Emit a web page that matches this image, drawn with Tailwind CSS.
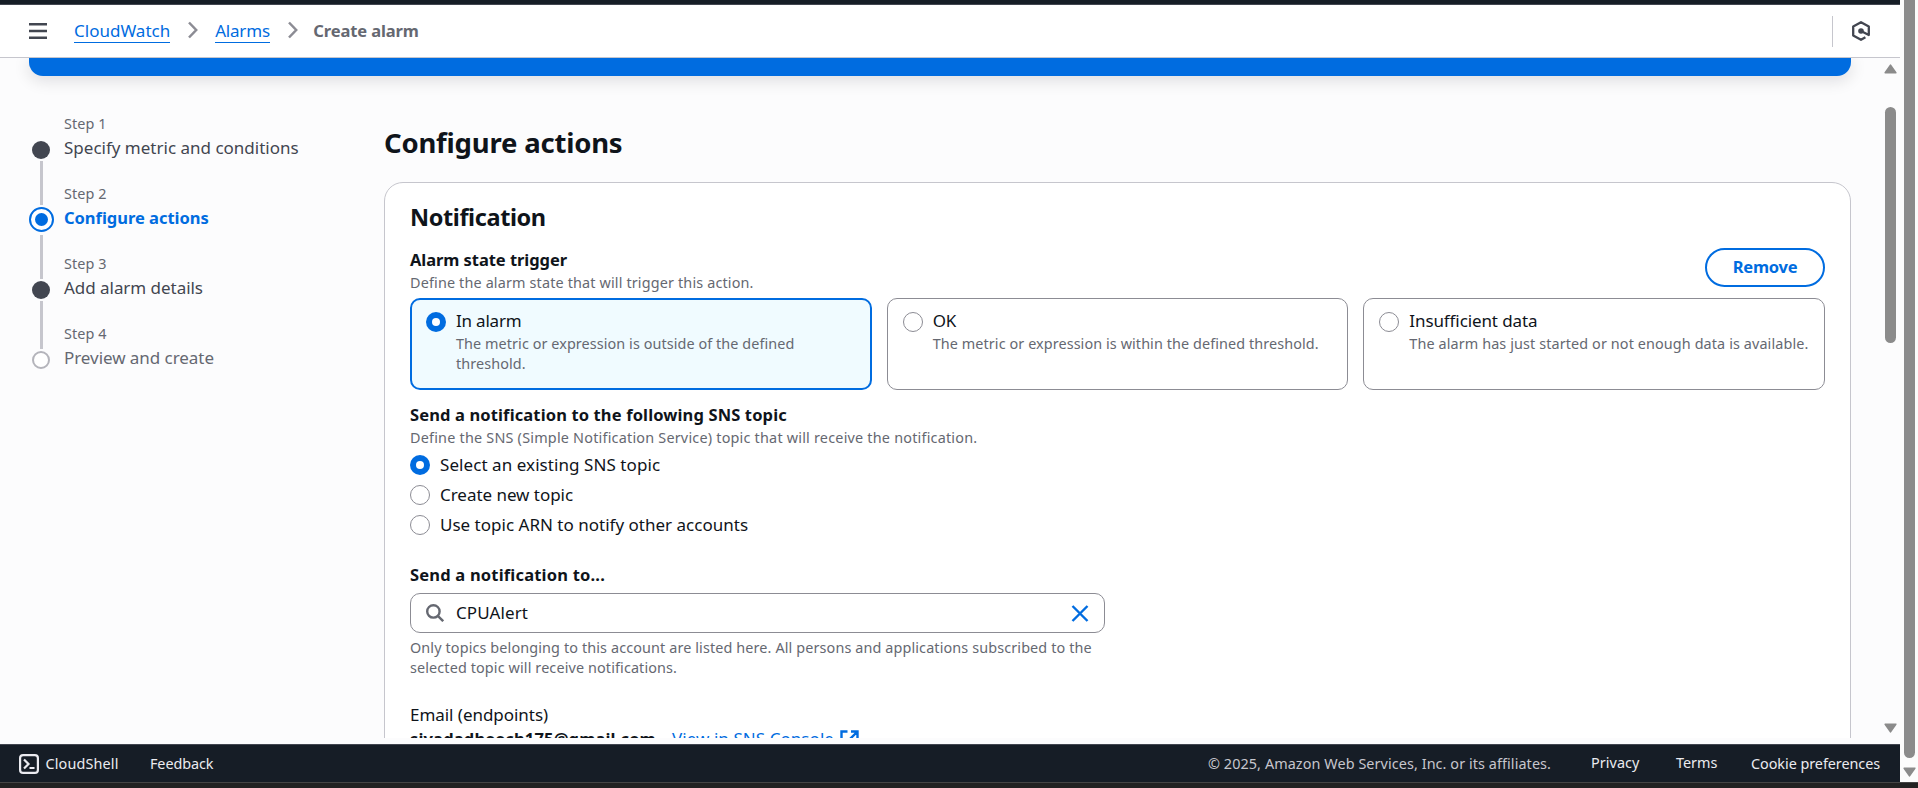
<!DOCTYPE html>
<html lang="en">
<head>
<meta charset="utf-8">
<title>Create alarm | CloudWatch</title>
<script src="https://cdn.jsdelivr.net/npm/@tailwindcss/browser@4"></script>
</head>
<body class="relative flex h-[788px] w-[1918px] flex-col overflow-hidden bg-[#222222] font-['Noto_Sans',sans-serif] text-[17px] leading-6 whitespace-nowrap text-[#0f141a]">
  <div class="flex h-[782px]">
    <div class="flex w-[1900px] flex-col">
      <!-- Top strip and breadcrumbs -->
      <div class="h-[5px] shrink-0 border-b border-[#424650] bg-[#161d26]"></div>
      <header class="flex h-[53px] shrink-0 items-center border-b border-[#c6c6cd] bg-white pr-[30px] pl-[29px]">
        <svg class="h-[18px] w-[18px]" viewBox="0 0 18 18" fill="none" stroke="#424650" stroke-width="2.4"><path d="M0 2.2h18M0 9h18M0 15.8h18"/></svg>
        <nav class="ml-[27px] flex items-center">
          <a class="h-[24px] border-b border-[#006ce0] text-[#006ce0] leading-[24px]">CloudWatch</a>
          <svg class="mr-[17px] ml-[18px] -mt-[3px] h-[18px] w-[10px]" viewBox="0 0 10 18" fill="none" stroke="#8c8c94" stroke-width="2.5"><path d="M1 1.5 8.2 9 1 16.5"/></svg>
          <a class="h-[24px] w-[55px] border-b border-[#006ce0] tracking-[-0.2px] text-[#006ce0] leading-[24px]">Alarms</a>
          <svg class="mx-[18px] -mt-[3px] h-[18px] w-[10px]" viewBox="0 0 10 18" fill="none" stroke="#8c8c94" stroke-width="2.5"><path d="M1 1.5 8.2 9 1 16.5"/></svg>
          <span class="-ml-[3px] text-[16.5px] font-bold tracking-[-0.1px] text-[#656871]">Create alarm</span>
        </nav>
        <div class="ml-auto h-[31px] w-px bg-[#c6c6cd]"></div>
        <svg class="ml-[19px] h-[20px] w-[18px]" viewBox="0 0 18 20" fill="none" stroke="#424650" stroke-width="2.3" stroke-linejoin="round"><path d="M13.400 16.300 9 18.800 1.200 14.400V5.600L9 1.200l7.800 4.400v8.400L9 10"/><circle cx="9" cy="10" r="2.8" fill="#424650" stroke="none"/></svg>
      </header>

      <div class="flex h-[686px] bg-[#fcfcfd]">
        <main class="h-[680px] w-[1880px] overflow-hidden pl-[29px]">
          <!-- Flash banner -->
          <div class="h-[18px] w-[1822px] rounded-b-[14px] bg-[#006ce0] shadow-[0_4px_16px_1px_rgba(0,7,22,0.12)]"></div>
          <div class="flex">
            <!-- Wizard steps -->
            <aside class="w-[355px] shrink-0 pt-[38px]">
              <ol>
                <li class="flex h-[70px]">
                  <div class="flex w-[25px] flex-col items-center pt-[27px]"><div class="-ml-px h-[18px] w-[18px] shrink-0 rounded-full bg-[#424650]"></div><div class="mt-[2px] h-[44px] w-[3px] shrink-0 bg-[#c6c6cd]"></div></div>
                  <div class="pl-[10px]"><div class="text-[14.4px] leading-5 tracking-[0.08px] text-[#656871]">Step 1</div><div class="mt-[2px] text-[#424650]">Specify metric and conditions</div></div>
                </li>
                <li class="flex h-[70px]">
                  <div class="flex w-[25px] flex-col items-center pt-[23px]"><div class="flex h-[25px] w-[25px] shrink-0 items-center justify-center rounded-full border-[2.4px] border-[#006ce0] bg-white"><div class="h-[13px] w-[13px] rounded-full bg-[#006ce0]"></div></div><div class="mt-[3px] h-[44px] w-[3px] shrink-0 bg-[#c6c6cd]"></div></div>
                  <div class="pl-[10px]"><div class="text-[14.4px] leading-5 tracking-[0.08px] text-[#656871]">Step 2</div><div class="mt-[2px] text-[16.5px] font-bold tracking-[-0.02px] text-[#006ce0]">Configure actions</div></div>
                </li>
                <li class="flex h-[70px]">
                  <div class="flex w-[25px] flex-col items-center pt-[27px]"><div class="-ml-px h-[18px] w-[18px] shrink-0 rounded-full bg-[#424650]"></div><div class="mt-[2px] h-[48px] w-[3px] shrink-0 bg-[#c6c6cd]"></div></div>
                  <div class="pl-[10px]"><div class="text-[14.4px] leading-5 tracking-[0.08px] text-[#656871]">Step 3</div><div class="mt-[2px] tracking-[-0.04px] text-[#424650]">Add alarm details</div></div>
                </li>
                <li class="flex h-[70px]">
                  <div class="flex w-[25px] flex-col items-center pt-[27px]"><div class="-ml-px h-[18px] w-[18px] shrink-0 rounded-full border-[2.4px] border-[#b4b4bb] bg-white"></div></div>
                  <div class="pl-[10px]"><div class="text-[14.4px] leading-5 tracking-[0.08px] text-[#656871]">Step 4</div><div class="mt-[2px] tracking-[-0.05px] text-[#656871]">Preview and create</div></div>
                </li>
              </ol>
            </aside>

            <section class="w-[1467px] shrink-0 pt-[49px]">
              <h1 class="text-[27.5px] leading-9 font-bold tracking-[-0.2px]">Configure actions</h1>
              <div class="mt-[21px] h-[700px] rounded-[19px] border border-[#c6c6cd] bg-white px-[25px] pt-[19px]">
                <h2 class="text-[23.5px] leading-[30px] font-bold tracking-[-0.4px]">Notification</h2>
                <div class="mt-[15px] flex justify-between">
                  <div>
                    <div class="mt-px text-[16.5px] font-bold tracking-[-0.06px]">Alarm state trigger</div>
                    <div class="mt-px text-[14.4px] leading-5 tracking-[0.15px] text-[#656871]">Define the alarm state that will trigger this action.</div>
                  </div>
                  <button class="mt-px h-[39px] w-[120px] rounded-full border-[2.4px] border-[#006ce0] pb-[2px] text-[16.5px] font-bold tracking-[-0.25px] text-[#006ce0]">Remove</button>
                </div>
                <!-- Alarm state tiles -->
                <div class="mt-[5px] grid grid-cols-3 gap-[15px]">
                  <div class="flex h-[92px] gap-[10px] rounded-[10px] border-[2.4px] border-[#006ce0] bg-[#f0fbff] pt-[10px] pl-[14px]">
                    <div class="mt-[2px] flex h-5 w-5 items-center justify-center rounded-full bg-[#006ce0]"><div class="h-2 w-2 rounded-full bg-white"></div></div>
                    <div><div class="-mt-px tracking-[-0.2px]">In alarm</div><div class="mt-px text-[14.4px] leading-5 tracking-[0.08px] text-[#656871]">The metric or expression is outside of the defined<br>threshold.</div></div>
                  </div>
                  <div class="flex h-[92px] gap-[10px] rounded-[10px] border border-[#8c8c94] bg-white pt-[11px] pl-[15px]">
                    <div class="mt-[2px] h-5 w-5 rounded-full border border-[#8c8c94] bg-white"></div>
                    <div><div class="-mt-px tracking-[-0.3px]">OK</div><div class="mt-px text-[14.4px] leading-5 tracking-[0.09px] text-[#656871]">The metric or expression is within the defined threshold.</div></div>
                  </div>
                  <div class="flex h-[92px] gap-[10px] rounded-[10px] border border-[#8c8c94] bg-white pt-[11px] pl-[15px]">
                    <div class="mt-[2px] h-5 w-5 shrink-0 rounded-full border border-[#8c8c94] bg-white"></div>
                    <div><div class="-mt-px tracking-[-0.1px]">Insufficient data</div><div class="mt-px text-[14.4px] leading-5 tracking-[0.11px] text-[#656871]">The alarm has just started or not enough data is available.</div></div>
                  </div>
                </div>
                <!-- SNS topic choice -->
                <div class="mt-[13px] text-[16.5px] font-bold tracking-[0.13px]">Send a notification to the following SNS topic</div>
                <div class="mt-px text-[14.4px] leading-5 tracking-[0.21px] text-[#656871]">Define the SNS (Simple Notification Service) topic that will receive the notification.</div>
                <div class="mt-[5px] flex flex-col gap-[6px]">
                  <label class="flex items-center gap-[10px]"><span class="flex h-5 w-5 items-center justify-center rounded-full bg-[#006ce0]"><span class="h-2 w-2 rounded-full bg-white"></span></span><span class="tracking-[0.07px]">Select an existing SNS topic</span></label>
                  <label class="flex items-center gap-[10px]"><span class="h-5 w-5 rounded-full border border-[#8c8c94]"></span><span class="tracking-[-0.04px]">Create new topic</span></label>
                  <label class="flex items-center gap-[10px]"><span class="h-5 w-5 rounded-full border border-[#8c8c94]"></span><span class="tracking-[0.01px]">Use topic ARN to notify other accounts</span></label>
                </div>
                <div class="mt-[26px] text-[16.5px] font-bold tracking-[0.19px]">Send a notification to...</div>
                <div class="mt-[6px] flex h-[40px] w-[695px] items-center rounded-[10px] border border-[#8c8c94] bg-white pr-[15px] pl-[15px]">
                  <svg class="h-[18px] w-[18px]" viewBox="0 0 18 18" fill="none" stroke="#656871" stroke-width="2.4"><circle cx="7.4" cy="7.4" r="6.2"/><path d="m11.8 11.8 5.4 5.4"/></svg>
                  <span class="ml-[12px] tracking-[0.09px]">CPUAlert</span>
                  <svg class="ml-auto h-[17px] w-[18px]" viewBox="0 0 18 17" fill="none" stroke="#006ce0" stroke-width="2.4"><path d="m1.5 1 15 15M16.500 1l-15 15"/></svg>
                </div>
                <div class="mt-[5px] text-[14.4px] leading-5 tracking-[0.12px] text-[#656871]">Only topics belonging to this account are listed here. All persons and applications subscribed to the<br>selected topic will receive notifications.</div>
                <div class="mt-[25px] tracking-[-0.04px]">Email (endpoints)</div>
                <div class="flex"><span class="w-[246px] text-[16.5px] font-bold tracking-[0.16px]">sivadadheech175@gmail.com</span>
                  <a class="ml-[16px] tracking-[0.06px] text-[#006ce0]">View in SNS Console</a>
                  <svg class="mt-[3px] ml-[6px] h-[19px] w-[19px]" viewBox="0 0 19 19" fill="none" stroke="#006ce0" stroke-width="2.4"><path d="M7.500 1.500h-6v16h16v-6M11 1.500h6.500V8M17.500 1.500 8.500 10.500"/></svg>
                </div>
              </div>
            </section>
          </div>
        </main>
        <!-- Inner scrollbar -->
        <div class="flex w-5 flex-col items-center pl-px">
          <svg class="mt-[6px] h-[10px] w-[13px]" viewBox="0 0 13 10"><path d="M6.500 1.200 11.800 8.800H1.200z" fill="#8b8b8b" stroke="#8b8b8b" stroke-width="1.600" stroke-linejoin="round"/></svg>
          <div class="mt-[33px] h-[236px] w-[11px] rounded-full bg-[#8b8b8b]"></div>
          <svg class="mt-auto mb-[11px] h-[10px] w-[13px]" viewBox="0 0 13 10"><path d="M6.500 8.800 11.800 1.200H1.200z" fill="#8b8b8b" stroke="#8b8b8b" stroke-width="1.600" stroke-linejoin="round"/></svg>
        </div>
      </div>

      <!-- Footer -->
      <footer class="flex h-[38px] shrink-0 items-center border-t border-[#424650] bg-[#161d26] pl-[19px] text-[14.4px] text-[#ebebf0]">
        <svg class="h-5 w-5" viewBox="0 0 20 20" fill="none" stroke="#ebebf0" stroke-width="2.2"><rect x="1.1" y="1.1" width="17.800" height="17.800" rx="3"/><path d="m5 5.500 4.500 4.500L5 14.500M10.500 14h5"/></svg>
        <span class="ml-[6.5px] w-[73px] tracking-[0.15px]">CloudShell</span>
        <span class="ml-[31.5px] tracking-[-0.1px]">Feedback</span>
        <div class="ml-auto flex pr-[20px]">
          <span class="w-[343px] tracking-[0.08px] text-[#c6c6cd]">© 2025, Amazon Web Services, Inc. or its affiliates.</span>
          <span class="-mt-px ml-[40px] w-[49px] tracking-[0.07px]">Privacy</span>
          <span class="-mt-px ml-[36px] w-[41px]">Terms</span>
          <span class="ml-[34px] w-[129px] tracking-[-0.05px]">Cookie preferences</span>
        </div>
      </footer>
    </div>
    <!-- Window scrollbar -->
    <div class="flex w-[18px] flex-col items-center bg-[#fcfcfc]">
      <div class="ml-px h-[758px] w-[11px] rounded-b-full bg-[#8b8b8b]"></div>
      <svg class="mt-[9px] ml-px h-[10px] w-[13px]" viewBox="0 0 13 10"><path d="M6.500 8.800 11.800 1.200H1.200z" fill="#8b8b8b" stroke="#8b8b8b" stroke-width="1.600" stroke-linejoin="round"/></svg>
    </div>
  </div>
  <div class="h-[6px] border-t border-[#454545] bg-[#222222]"></div>
</body>
</html>
